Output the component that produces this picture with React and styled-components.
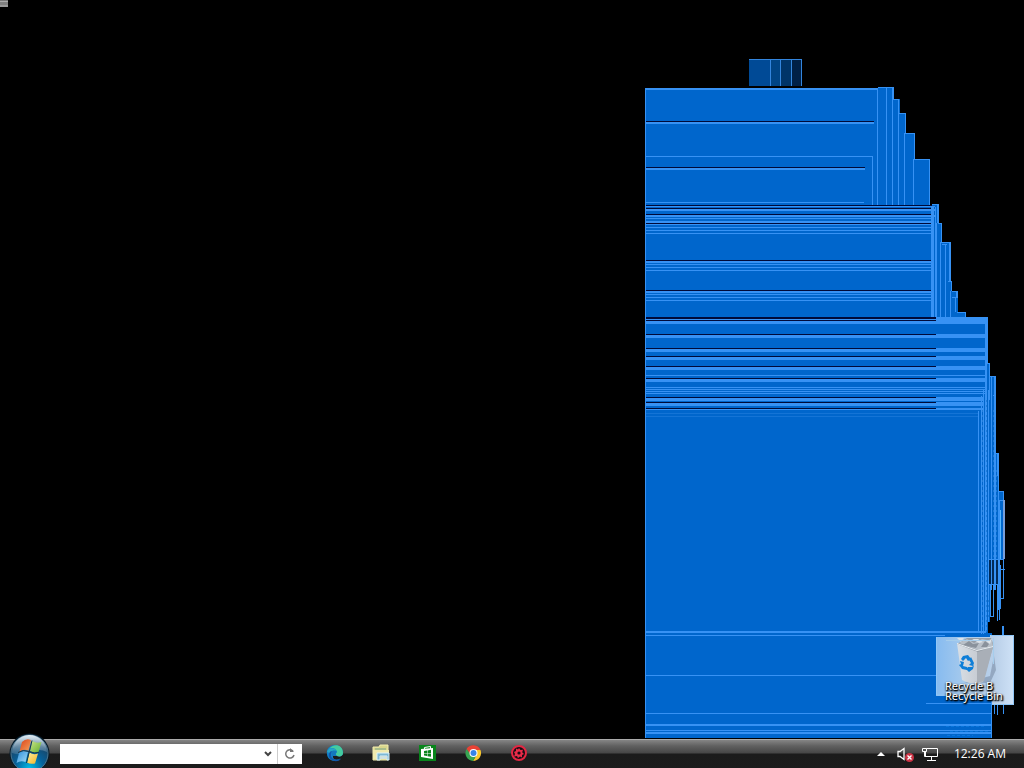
import React from 'react';
import styled, { createGlobalStyle } from 'styled-components';

const GlobalStyle = createGlobalStyle`
  * { box-sizing: border-box; }
  body { margin: 0; background: #000; font-family: "Open Sans", "Noto Sans", sans-serif; }
`;

const Screen = styled.div`
  display: flex;
  flex-direction: column;
  height: 100vh;
  overflow: hidden;
  background: #000;
`;

const Desktop = styled.main`
  position: relative;
  flex: 1;
  min-height: 0;
`;

const Fragment = styled.div`
  width: 8px;
  height: 7px;
  background: linear-gradient(#777 0 1px, #aaa 1px 2px, #808080 2px 5px, #999 5px);
`;

const TrailArt = styled.svg`
  position: absolute;
  right: 0;
  bottom: 0;
`;

const DesktopIcon = styled.button`
  position: absolute;
  right: 10px;
  bottom: 34px;
  width: 78px;
  height: 70px;
  padding: 0;
  border: 0;
  background: transparent;
  color: #fff;
  font: 11px/10px "Noto Sans", "Open Sans", sans-serif;
  text-shadow: 1px 1px 1px #000, 0 1px 2px #000, 1px 1px 2px #000;
`;

const IconArt = styled.svg`
  display: block;
`;

const IconLabels = styled.span`
  position: absolute;
  left: 9px;
  bottom: 4px;
  display: grid;
  text-align: left;
  white-space: nowrap;
`;

const Taskbar = styled.footer`
  position: relative;
  display: flex;
  align-items: center;
  height: 29px;
  padding: 0 18px 0 9px;
  border-top: 1px solid #aaa;
  background: linear-gradient(#858585 0, #606060 6px, #464646 13px, #1b1b1b 14px, #1c1c1c 100%);
`;

const StartButton = styled.button`
  position: relative;
  z-index: 1;
  width: 42px;
  height: 42px;
  margin: 0 9px 0 0;
  padding: 0;
  border: 0;
  background: transparent;
  svg { display: block; }
`;

const AddressBar = styled.form`
  display: flex;
  width: 242px;
  height: 20px;
  background: #fff;
`;

const AddressInput = styled.input`
  flex: 1;
  min-width: 0;
  border: 0;
  outline: 0;
  background: #fff;
  font: 12px "Open Sans", sans-serif;
`;

const BarButton = styled.button`
  display: grid;
  place-items: center;
  width: ${(p) => (p.$divided ? '25px' : '18px')};
  padding: 0;
  border: 0;
  border-left: ${(p) => (p.$divided ? '1px solid #ccc' : '0')};
  background: #fff;
`;

const Launchers = styled.nav`
  display: flex;
  gap: 28px;
  margin-left: 24px;
  padding-bottom: 2px;
`;

const Launcher = styled.button`
  width: 18px;
  height: 18px;
  padding: 0;
  border: 0;
  background: transparent;
  svg { display: block; }
`;

const Tray = styled.div`
  display: flex;
  align-items: center;
  margin-left: auto;
`;

const TrayButton = styled.button`
  width: ${(p) => p.$width};
  height: 18px;
  margin-right: ${(p) => p.$gap};
  padding: 0;
  border: 0;
  background: transparent;
  svg { display: block; }
`;

const Clock = styled.time`
  color: #fff;
  font: 12px/18px "Open Sans", sans-serif;
  white-space: nowrap;
`;

const BLUE = '#0066cc';
const LIGHT = '#3792f4';
const DARK = '#000a38';

// Filled areas: x, y, right, bottom
const areas = [
  [645, 88, 879, 738], [878, 87, 894, 205], [893, 99, 900, 205],
  [899, 113, 906, 205], [905, 133, 915, 205], [914, 159, 930, 205],
  [878, 205, 938, 318], [938, 223, 942, 318], [941, 242, 951, 318],
  [950, 281, 952, 318], [952, 291, 958, 318], [957, 312, 966, 318],
  [878, 317, 988, 738], [987, 363, 990, 622], [989, 376, 995, 585],
  [995, 395, 996, 585], [996, 453, 998, 585], [997, 491, 1004, 560],
  [987, 633, 992, 738],
];

// Horizontal strokes: y, right edge, thickness
const rows = [
  [88, 878, 2], [122, 874, 2], [156, 873, 1], [168, 865, 2], [202, 864, 1],
  [206, 935, 1], [209, 935, 2], [215, 935, 2], [218, 932, 1], [221, 932, 2],
  [224, 932, 1], [227, 932, 1], [230, 932, 1], [233, 932, 1],
  [261, 932, 2], [264, 932, 1], [267, 932, 1], [270, 932, 1],
  [291, 932, 2], [294, 932, 1], [297, 932, 1], [300, 932, 1],
  [319, 987, 1], [321, 987, 3], [335, 987, 3], [349, 987, 3], [357, 987, 3],
  [367, 987, 3], [375, 986, 1], [379, 987, 3], [387, 986, 1], [389, 986, 1],
  [391, 986, 1], [393, 986, 1], [398, 983, 3], [403, 983, 3], [409, 983, 1],
  [631, 986, 2], [635, 945, 1], [675, 940, 1], [713, 991, 1],
  [724, 991, 2], [730, 991, 1], [732, 991, 2],
];

const darkRows = [
  [121, 874, 1], [167, 865, 1], [205, 932, 1], [208, 932, 1], [214, 932, 1],
  [223, 932, 1], [260, 932, 1], [290, 932, 1], [317, 936, 2], [320, 936, 1],
  [334, 936, 1], [348, 936, 1], [356, 936, 1], [366, 936, 1], [378, 936, 1],
  [397, 936, 1], [402, 936, 1], [408, 936, 1],
];

const brightRows = [317, 320, 334, 348, 356, 366, 378, 397, 402, 408];

// Vertical strokes: x, top, bottom, thickness
const columns = [
  [645, 88, 738, 1], [872, 156, 205, 1], [877, 88, 205, 1], [886, 87, 205, 1],
  [892, 87, 205, 1], [893, 87, 99, 1], [898, 99, 205, 1], [905, 113, 133, 1],
  [904, 133, 205, 1], [914, 133, 159, 1], [913, 159, 205, 1], [929, 159, 205, 1],
  [931, 206, 317, 3], [935, 207, 317, 1], [937, 204, 223, 2], [936, 223, 317, 1],
  [941, 223, 242, 1], [940, 242, 317, 1], [945, 244, 317, 1], [949, 242, 281, 2],
  [951, 281, 291, 1], [950, 291, 317, 1], [956, 291, 298, 2], [955, 298, 312, 1],
  [965, 312, 317, 1], [985, 318, 632, 2], [987, 318, 363, 1],
  [978, 411, 631, 1], [981, 396, 634, 1], [983, 390, 634, 1],
  [989, 363, 400, 1], [988, 390, 622, 1], [991, 376, 590, 1],
  [994, 376, 590, 2], [995, 395, 453, 1], [997, 453, 475, 2],
  [1003, 491, 572, 1], [998, 475, 610, 1], [999, 500, 620, 1],
  [1003, 570, 599, 1], [1000, 565, 609, 1], [997, 584, 621, 1],
  [993, 584, 616, 1], [990, 584, 617, 1], [988, 600, 622, 1],
  [1002, 626, 638, 2], [991, 702, 738, 1], [994, 702, 714, 1],
  [997, 702, 715, 1], [1003, 702, 714, 1],
];

const caps = [
  [878, 87, 16], [893, 99, 6], [899, 113, 7], [905, 133, 10], [914, 159, 16],
  [932, 204, 7], [938, 223, 4], [941, 242, 10], [942, 244, 5], [948, 281, 4],
  [952, 291, 6], [952, 297, 4], [957, 312, 9], [936, 317, 52], [987, 363, 3],
  [990, 376, 5], [993, 395, 3], [995, 453, 4], [995, 475, 3], [998, 491, 6],
  [999, 500, 5], [989, 559, 15], [1000, 569, 5], [988, 584, 11],
  [990, 616, 4], [1001, 598, 3], [926, 703, 65],
];

function Trail() {
  return (
    <TrailArt width="384" height="689" viewBox="640 50 384 689" shapeRendering="crispEdges" aria-hidden="true">
      <path fill="#004a96" d="M749 59h22v27h-22z" />
      <path fill="#004484" d="M771 59h10v27h-10z" />
      <path fill="#003468" d="M781 59h11v27h-11z" />
      <path fill="#002046" d="M792 59h10v27h-10z" />
      <path fill="#3385dd" d="M749 59h53v1h-53zM770 59h1v27h-1zM780 59h1v27h-1zM791 59h1v27h-1zM801 59h1v27h-1z" />
      {areas.map(([x, y, r, b], i) => <rect key={i} x={x} y={y} width={r - x} height={b - y} fill={BLUE} />)}
      <path fill="#022b58" d="M989 560h5v24h-5zM995 560h3v24h-3z" />
      <path fill="#1474d6" d="M646 413h332v1H646zM646 416h332v1H646z" />
      {rows.map(([y, r, h], i) => <rect key={i} x="645" y={y} width={r - 645} height={h} fill={LIGHT} />)}
      {darkRows.map(([y, r, h], i) => <rect key={i} x="645" y={y} width={r - 645} height={h} fill={DARK} />)}
      {brightRows.map((y) => <rect key={y} x="936" y={y} width={y < 390 ? 51 : 47} height="2" fill={LIGHT} />)}
      {columns.map(([x, t, b, w], i) => <rect key={i} x={x} y={t} width={w} height={b - t} fill={LIGHT} />)}
      {caps.map(([x, y, w], i) => <rect key={i} x={x} y={y} width={w} height="1" fill={LIGHT} />)}
      <path fill="#55b9ff" d="M1000 510h1v49h-1z" />
      <path fill="#789fda" d="M1003 500h2v59h-2z" />
      <path stroke="#207bd6" strokeDasharray="2 3" d="M986.500 400v232M982.500 410v220M993.500 410v150M996.500 470v88M988.500 600v20" />
      <path fill="none" stroke="#0875dc" strokeDasharray="3 2" d="M946 726h40M950 731h38M947 735h26" />
    </TrailArt>
  );
}

function BinArt() {
  return (
    <IconArt width="78" height="70" viewBox="936 635 78 70" aria-hidden="true">
      <defs>
        <linearGradient id="selection" x2="1"><stop stopColor="#86bbf0" /><stop offset=".4" stopColor="#a9cbec" /><stop offset=".75" stopColor="#b9cfe8" /><stop offset="1" stopColor="#cfe2f7" /></linearGradient>
        <linearGradient id="bin" x2="1"><stop stopColor="#d9dfe5" /><stop offset=".6" stopColor="#c6cbd2" /><stop offset="1" stopColor="#9da4ad" /></linearGradient>
      </defs>
      <path fill="url(#selection)" d="M936 637h54v-2h24v70h-22v-9h-56z" />
      <path fill="none" stroke="#91c7f7" d="M936.500 637v58h55M991 635.500h22.500v69H992" />
      <path fill="#0066cc" d="M936 696h56v9h-56z" />
      <path fill="#3792f4" d="M926 703h66v1h-66zM991 696h1v9h-1z" />
      <path fill="#26344a" fillOpacity=".25" d="m964 683 26-7 4-20 2 14-6 13z" />
      <path fill="url(#bin)" d="m957 643 5 37q11 6 21 2l10-35-15 4z" />
      <path fill="#a9afb7" d="m977 651 16-4-9 34-7 2z" />
      <path fill="#959da6" d="m957 644 10-6h24l3 8-16 6z" />
      <path fill="#b9c0c8" d="m959 643 8-4 7 4 8-4 10 2 1 5-15 4z" />
      <path fill="#8a929c" d="m963 645 6-4 4 3 6-1-3 5zm18 2 4-6 4 3-2 3z" />
      <path fill="#dce2e8" d="m957 638 7 0-3 4zm15 1 6 0 5 3-4 1zm14 2 6-2-2 5z" />
      <path fill="none" stroke="#e9eef2" d="m957 643.500 20 7 16-4" />
      <path fill="none" stroke="#a6cdec" d="M946 640.500h44M993.500 638v26" />
      <g fill="#0f7fd8">
        <path d="m963 656 5-1 3 4-3 2-2-3-3 3-2-2z" />
        <path d="m971 657 3 6-1 3-4-1 2-2-2-3z" />
        <path d="m960 661 4 1-1 4 4 1v3l-5-1-3-4 2-1z" />
        <path d="m968 667 4 0 2-2-1 4-4 3-3-3z" />
      </g>
    </IconArt>
  );
}

function StartLogo() {
  return (
    <svg width="42" height="42" viewBox="0 0 42 42" aria-hidden="true">
      <defs>
        <radialGradient id="orb" cx=".5" cy=".9" r=".85"><stop stopColor="#00bce7" /><stop offset=".45" stopColor="#07629b" /><stop offset=".8" stopColor="#17476a" /><stop offset="1" stopColor="#92a9b9" /></radialGradient>
        <linearGradient id="shine" x2="0" y2="1"><stop stopColor="#e2edf5" /><stop offset="1" stopColor="#6a91ad" stopOpacity=".35" /></linearGradient>
        <linearGradient id="red" x2="1" y2="1"><stop stopColor="#d8431c" /><stop offset="1" stopColor="#f8a25a" /></linearGradient>
        <linearGradient id="green" x2="1" y2="1"><stop stopColor="#cbe68a" /><stop offset="1" stopColor="#62ad2c" /></linearGradient>
        <linearGradient id="sky" x2="1" y2="1"><stop stopColor="#2d8fdc" /><stop offset="1" stopColor="#a5dcf6" /></linearGradient>
        <linearGradient id="gold" x2="1" y2="1"><stop stopColor="#fff0a0" /><stop offset="1" stopColor="#f5b321" /></linearGradient>
      </defs>
      <circle cx="20.500" cy="20.500" r="20" fill="#071c2b" />
      <circle cx="20.500" cy="20.500" r="18.500" fill="url(#orb)" stroke="#4c768f" />
      <path fill="url(#shine)" d="M3 20a17.500 17.500 0 0 1 35-1q-8-4-17 0T3 20" />
      <path fill="url(#red)" d="M13 9q4-4 9-2l-2.500 10.500q-5-2-9 1z" />
      <path fill="url(#green)" d="M23.500 8q4 3 9 1l-3 10q-4 2-8.500-1z" />
      <path fill="url(#sky)" d="M10 20q4-3 9-1l-2.500 10q-5-2-9 1z" />
      <path fill="url(#gold)" d="M20.500 19.500q4 3 8.500 1l-3 10q-5 1-8-1z" />
      <path fill="none" stroke="#15364b" d="M9 19.500q5-3.500 11-1t10 .8M23 7.500 17.500 30" />
    </svg>
  );
}

const apps = [
  ['Microsoft Edge', <>
    <path fill="#1281ca" d="M1 10C0 5 4 1 9 1s8 4 8 8c0 3-3 4-6 3-1 0-2 0-2-1-2 0-3 2-1 4 2 1 4 1 7-1-5 6-14 2-14-4z" />
    <path fill="#44cb9f" d="M3 5C7-1 17 0 17 9c0 3-3 4-6 3-2-1-1-3 0-4-1-4-5-5-8-3z" />
    <path fill="#27a5c6" d="M1 8c1-5 9-5 10 0-3-2-5-1-6 1-1 0-2 0-4-1z" />
    <path fill="#1257ab" d="M5 10c-1 5 5 7 10 5-4 4-10 2-12-2-1-3 1-6 3-6z" />
    <path fill="#1478be" d="M6 7c3-1 5 0 5 1-2 1-2 3 0 4H6z" />
  </>],
  ['File Explorer', <>
    <path fill="#d8d68c" stroke="#f2edaf" d="M1 3h6l1-2h8v15H1z" />
    <path fill="#f0eaae" d="M1 6h16v9H1z" />
    <path fill="#a8bd8c" d="M3 4h11v2H3z" />
    <path fill="#7eb8d4" stroke="#dcf3fa" d="M5 9h12v7h-2v-4H8v4H5z" />
    <path fill="#d0e1df" d="M8 12h7v3H8z" />
  </>],
  ['Store', <>
    <path fill="#09851c" d="M1 1h17v16H1z" />
    <path fill="#fff" d="m3 5 12-1v11L3 13z" />
    <path fill="none" stroke="#fff" d="M6.500 5V3.500l6-1V5" />
    <path fill="#09851c" d="m6 7 3-.5V9H6zm3.500-.6 3.500-.6V9H9.500zM6 9.500h3V12l-3-.4zm3.500 0H13v3.200l-3.500-.5z" />
  </>],
  ['Google Chrome', <>
    <path fill="#e84235" d="M2.500 5a8 8 0 0 1 14 1H9L6 10z" />
    <path fill="#f9c62d" d="M16.500 6A8 8 0 0 1 9 17l4-7-2-4z" />
    <path fill="#38a451" d="M2.500 5A8 8 0 0 0 9 17l3-5-5-1z" />
    <circle cx="9.500" cy="9" r="4" fill="#fff" /><circle cx="9.500" cy="9" r="3" fill="#3683e8" />
  </>],
  ['Screen recorder', <>
    <circle cx="9" cy="9" r="7" fill="#180d14" stroke="#e42642" strokeWidth="2" />
    <path fill="#e92b48" d="m9 4 1.500 2 2.500-.2-.8 2.400L14 10l-2 1v2.500l-2-1L8 14l-1-2-3 .5L5 10 4 8l2-1V4.500l2 1z" />
    <circle cx="9" cy="9" r="1.600" fill="#180d14" />
  </>],
];

export default function App() {
  return (
    <Screen>
      <GlobalStyle />
      <Desktop>
        <Fragment />
        <Trail />
        <DesktopIcon>
          <BinArt />
          <IconLabels><span>Recycle B</span><span>Recycle Bin</span></IconLabels>
        </DesktopIcon>
      </Desktop>
      <Taskbar>
        <StartButton aria-label="Start"><StartLogo /></StartButton>
        <AddressBar onSubmit={(e) => e.preventDefault()}>
          <AddressInput aria-label="Address" />
          <BarButton type="button" aria-label="Show addresses">
            <svg width="10" height="8" viewBox="0 0 10 8"><path d="m2 2 3 3 3-3" fill="none" stroke="#444" strokeWidth="2" /></svg>
          </BarButton>
          <BarButton $divided aria-label="Refresh">
            <svg width="14" height="14" viewBox="0 0 14 14"><path d="M10 4A4.200 4.200 0 1 0 11 8" fill="none" stroke="#777" strokeWidth="1.500" /><path d="M7 1v4h4z" fill="#777" /></svg>
          </BarButton>
        </AddressBar>
        <Launchers aria-label="Applications">
          {apps.map(([name, art]) => (
            <Launcher key={name} aria-label={name}><svg width="18" height="18" viewBox="0 0 18 18">{art}</svg></Launcher>
          ))}
        </Launchers>
        <Tray>
          <TrayButton $width="10px" $gap="11px" aria-label="Show hidden icons">
            <svg width="10" height="18" viewBox="0 0 10 18"><path fill="#fff" d="m1 11 4-4 4 4z" /></svg>
          </TrayButton>
          <TrayButton $width="18px" $gap="6px" aria-label="Volume muted">
            <svg width="18" height="18" viewBox="0 0 18 18"><path fill="none" stroke="#fff" strokeWidth="1.300" d="M1 6.500h2l4-3v11l-4-3H1z" /><circle cx="12.500" cy="12.500" r="4.500" fill="#cb3345" /><path stroke="#fff" strokeWidth="1.300" d="m10.500 10.500 4 4m0-4-4 4" /></svg>
          </TrayButton>
          <TrayButton $width="18px" $gap="15px" aria-label="Network">
            <svg width="18" height="18" viewBox="0 0 18 18"><path fill="none" stroke="#fff" d="M5.500 3.500h11v8h-12v-5M10.500 12v3M6 15.500h9M1.500 3.500h4v3h-4zM3.500 7v4.500H5" /></svg>
          </TrayButton>
          <Clock>12:26 AM</Clock>
        </Tray>
      </Taskbar>
    </Screen>
  );
}
